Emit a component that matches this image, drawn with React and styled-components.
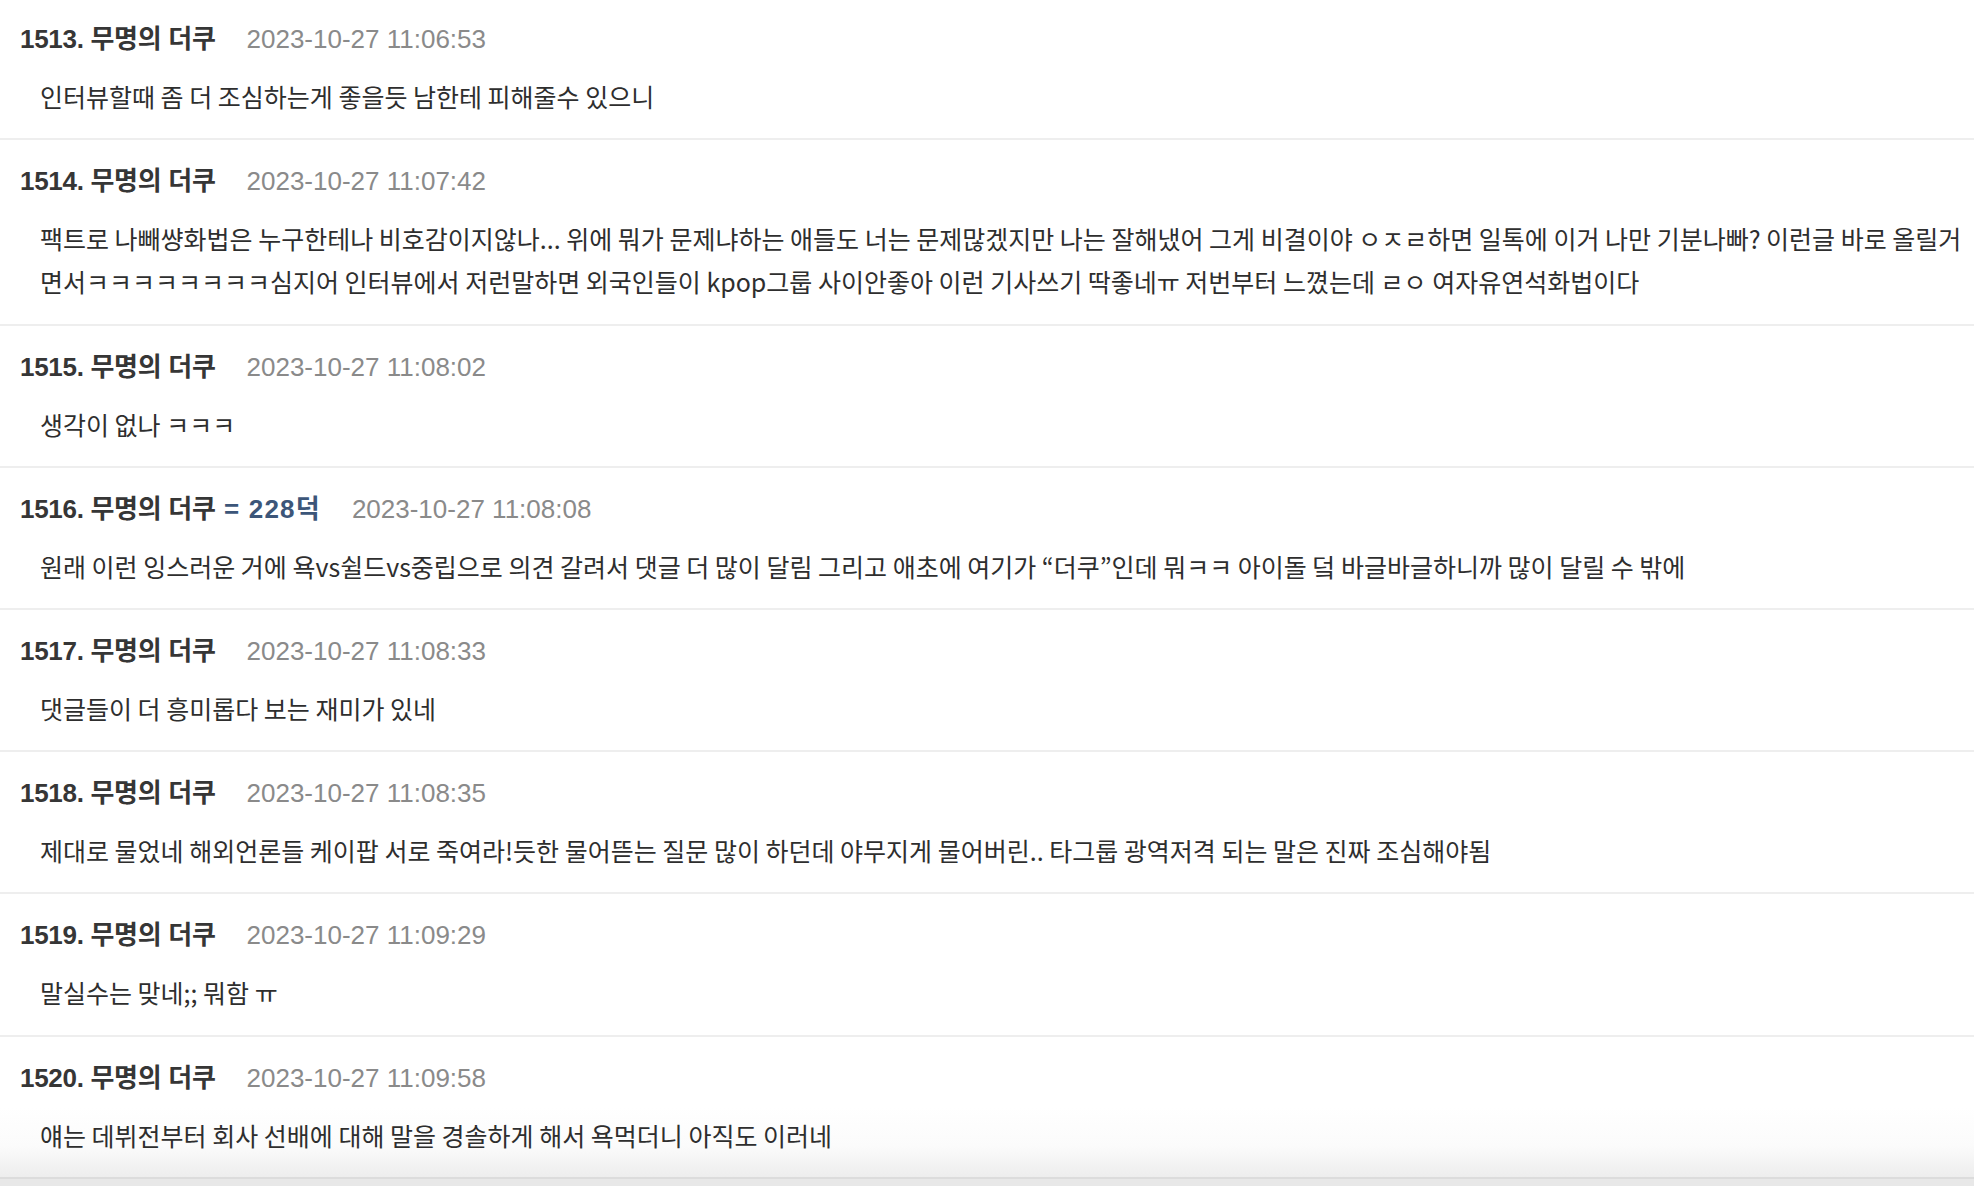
import React from "react";
import styled, { createGlobalStyle } from "styled-components";

const Global = createGlobalStyle`
  html, body { margin: 0; padding: 0; background: #fff; }
  body { overflow: hidden; }
`;

const Page = styled.div`
  width: 1974px;
  height: 1186px;
  overflow: hidden;
  background: #e8e8e8;
  font-family: "Liberation Sans", "Noto Sans CJK KR", sans-serif;
`;

const List = styled.ul`
  list-style: none;
  margin: -2px 0 0;
  padding: 0;
  background: #fff;
`;

const Row = styled.li`
  padding: 20px 0 20px 20px;
  border-bottom: 2px solid ${(p) => (p.$last ? "#dcdcdc" : "#eeeeee")};
  background: ${(p) =>
    p.$last ? "linear-gradient(to bottom, #fff 50%, #fbfbfb 78%, #ededed 100%)" : "#fff"};
`;

const Head = styled.div`
  display: flex;
  align-items: baseline;
  gap: 31px;
  height: 42px;
  line-height: 42px;
  white-space: nowrap;
`;

const Author = styled.span`
  font-size: 26px;
  font-weight: 700;
  color: #363636;
  letter-spacing: -0.3px;
`;

const Badge = styled.span`
  color: #3c5679;
  letter-spacing: 1.2px;
`;

const Time = styled.span`
  font-size: 26px;
  color: #8a8a8a;
`;

const Body = styled.div`
  margin-top: 15px;
  padding-left: 20px;
  font-size: 25px;
  line-height: 43.2px;
  color: #2e2e2e;
  font-family: "Noto Sans CJK KR", "Liberation Sans", sans-serif;
`;

const comments = [
  { n: 1513, t: "2023-10-27 11:06:53", b: "인터뷰할때 좀 더 조심하는게 좋을듯 남한테 피해줄수 있으니" },
  {
    n: 1514,
    t: "2023-10-27 11:07:42",
    b: "팩트로 나빼썅화법은 누구한테나 비호감이지않나... 위에 뭐가 문제냐하는 애들도 너는 문제많겠지만 나는 잘해냈어 그게 비결이야 ㅇㅈㄹ하면 일톡에 이거 나만 기분나빠? 이런글 바로 올릴거면서ㅋㅋㅋㅋㅋㅋㅋㅋ심지어 인터뷰에서 저런말하면 외국인들이 kpop그룹 사이안좋아 이런 기사쓰기 딱좋네ㅠ 저번부터 느꼈는데 ㄹㅇ 여자유연석화법이다",
  },
  { n: 1515, t: "2023-10-27 11:08:02", b: "생각이 없나 ㅋㅋㅋ" },
  {
    n: 1516,
    badge: "= 228덕",
    t: "2023-10-27 11:08:08",
    b: "원래 이런 잉스러운 거에 욕vs쉴드vs중립으로 의견 갈려서 댓글 더 많이 달림 그리고 애초에 여기가 “더쿠”인데 뭐ㅋㅋ 아이돌 덬 바글바글하니까 많이 달릴 수 밖에",
  },
  { n: 1517, t: "2023-10-27 11:08:33", b: "댓글들이 더 흥미롭다 보는 재미가 있네" },
  {
    n: 1518,
    t: "2023-10-27 11:08:35",
    b: "제대로 물었네 해외언론들 케이팝 서로 죽여라!듯한 물어뜯는 질문 많이 하던데 야무지게 물어버린.. 타그룹 광역저격 되는 말은 진짜 조심해야됨",
  },
  { n: 1519, t: "2023-10-27 11:09:29", b: "말실수는 맞네;; 뭐함 ㅠ" },
  { n: 1520, t: "2023-10-27 11:09:58", b: "얘는 데뷔전부터 회사 선배에 대해 말을 경솔하게 해서 욕먹더니 아직도 이러네" },
];

export default function App() {
  return (
    <Page>
      <Global />
      <List>
        {comments.map((c, i) => (
          <Row key={c.n} $last={i === comments.length - 1}>
            <Head>
              <Author>
                {c.n}. 무명의 더쿠{c.badge && <Badge> {c.badge}</Badge>}
              </Author>
              <Time>{c.t}</Time>
            </Head>
            <Body>{c.b}</Body>
          </Row>
        ))}
      </List>
    </Page>
  );
}
